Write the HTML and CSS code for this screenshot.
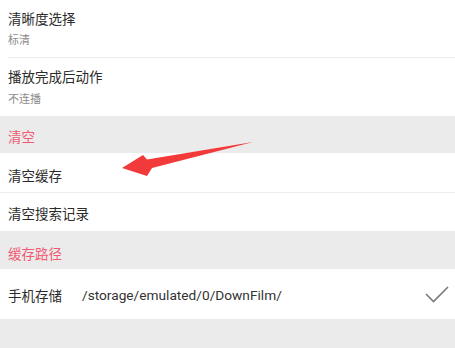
FILE: index.html
```html
<!DOCTYPE html>
<html lang="zh-CN">
<head>
<meta charset="utf-8">
<link rel="stylesheet" href="styles.css">
</head>
<body>
<div class="page">
  <div class="item two first">
    <div class="title">清晰度选择</div>
    <div class="sub">标清</div>
  </div>
  <div class="item two second">
    <div class="title">播放完成后动作</div>
    <div class="sub">不连播</div>
  </div>
  <div class="section s1">清空</div>
  <div class="item single r1">清空缓存</div>
  <div class="item single r2">清空搜索记录</div>
  <div class="section s2">缓存路径</div>
  <div class="item path-row">
    <span class="label">手机存储</span>
    <span class="path">/storage/emulated/0/DownFilm/</span>
    <svg class="check" width="24" height="20" viewBox="0 0 24 20">
      <polyline points="1,9 8.5,16.5 23,2" fill="none" stroke="#7a7a7a" stroke-width="1.6"/>
    </svg>
  </div>
  <div class="footer"></div>
  <svg class="arrow" width="455" height="348" viewBox="0 0 455 348">
    <polygon points="122,168 143,155 147,159.5 253,142 152,168 147,176" fill="#f23a3a"/>
  </svg>
</div>
</body>
</html>
```

FILE: styles.css
```css
* { box-sizing: border-box; }
html, body { margin: 0; padding: 0; background: #fff; }
.page {
  position: relative;
  width: 455px;
  height: 348px;
  overflow: hidden;
  font-family: Roboto, "Noto Sans CJK SC", sans-serif;
  color: #2b2b2b;
}
.item { background: #fff; }
.two { padding-left: 8px; }
.title { font-size: 13.5px; line-height: 18px; }
.sub { font-size: 11px; line-height: 15px; color: #8c8c8c; margin-top: 5px; }
.first { height: 58px; padding-top: 10px; position: relative; }
.first::after {
  content: "";
  position: absolute;
  left: 8px; right: 0; bottom: 0;
  height: 1px;
  background: #ececec;
}
.second { height: 58px; padding-top: 10px; }
.second .sub { margin-top: 6px; }
.section {
  background: #ebebeb;
  color: #f05b72;
  font-size: 13.5px;
  line-height: 18px;
  padding-left: 8px;
}
.s1 { height: 37px; padding-top: 12px; }
.s2 { height: 38px; padding-top: 14px; }
.single { font-size: 13.5px; line-height: 18px; padding-left: 8px; }
.r1 { height: 40px; padding-top: 14px; border-bottom: 1px solid #ececec; }
.r2 { height: 38px; padding-top: 12px; }
.path-row {
  height: 50px;
  display: flex;
  align-items: center;
  padding-left: 8px;
  padding-right: 5px;
  padding-top: 2px;
}
.label { font-size: 13.5px; width: 74px; }
.path { font-size: 13.7px; color: #333; flex: 1; }
.check { display: block; margin-right: 1px; }
.footer { background: #ebebeb; height: 29px; }
.arrow { position: absolute; left: 0; top: 0; pointer-events: none; }
```
